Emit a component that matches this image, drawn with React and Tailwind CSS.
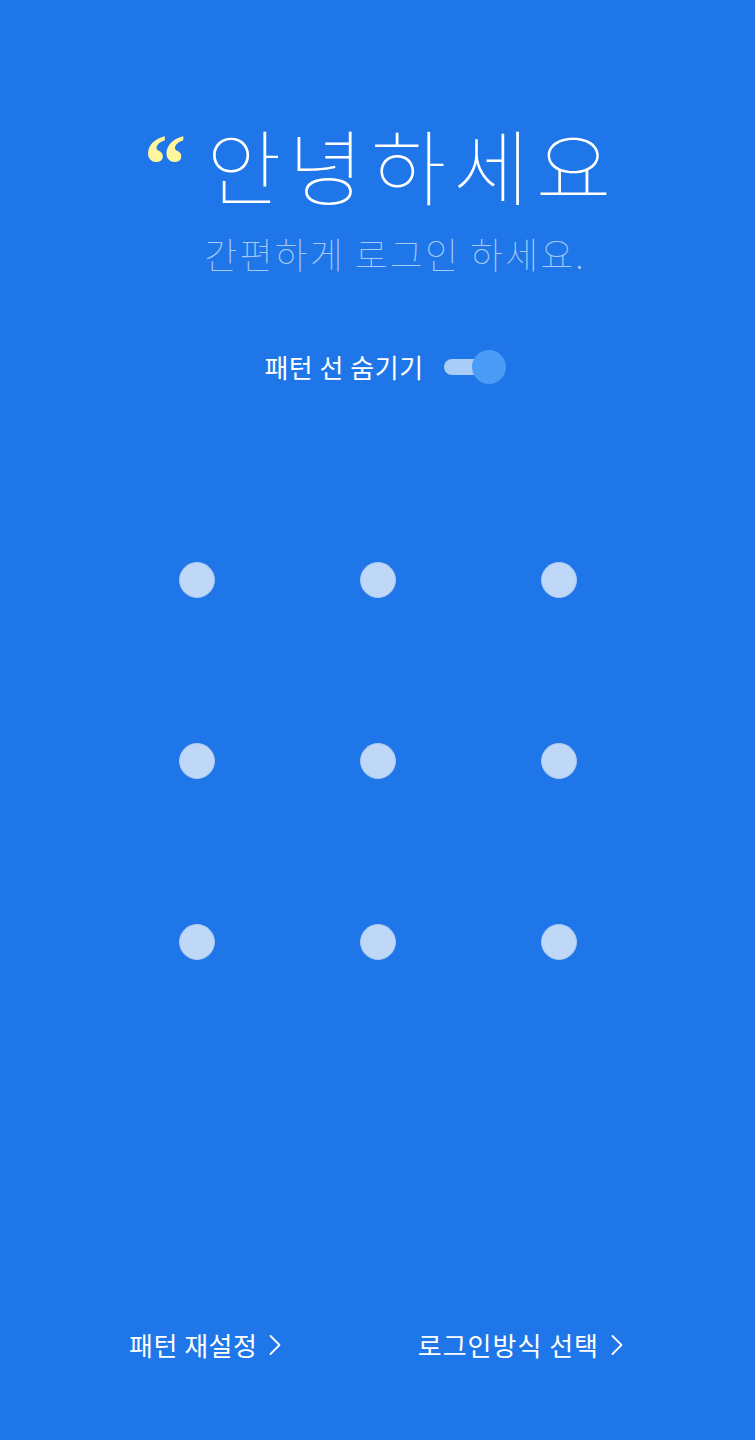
import React, { useState } from "react";

const font = { fontFamily: '"Noto Sans CJK KR", "Noto Sans", sans-serif' };

const Chevron = () => (
    <svg width="12" height="22" viewBox="0 0 12 22" fill="none" className="ml-[12px]">
        <path d="M1.5 2 L10.5 11 L1.5 20" stroke="white" strokeWidth="1.8" strokeLinecap="round" strokeLinejoin="round" />
    </svg>
);

const App = () => {
    const [hide, setHide] = useState(true);
    const dots = Array.from({ length: 9 });

    return (
        <div className="w-[755px] h-[1440px] bg-[#1e76e8] flex flex-col items-center text-white" style={font}>
            <div className="flex items-start mt-[109px]">
                <span className="text-[84px] leading-none font-bold text-[#fff59d] mt-[14px] mr-[20px] font-['Liberation_Serif',serif]">
                    “
                </span>
                <h1 className="text-[82px] leading-[110px] font-thin tracking-[7px] mr-[-7px]">안녕하세요</h1>
            </div>
            <p className="text-[36px] leading-[46px] font-thin text-[#a8cbf6] tracking-[2px] mt-[11px] ml-[35px]">
                간편하게 로그인 하세요.
            </p>

            <div className="flex items-center mt-[74px] ml-[15px]">
                <span className="text-[26px] leading-[34px] tracking-[0.5px]">패턴 선 숨기기</span>
                <button
                    type="button"
                    onClick={() => setHide(!hide)}
                    className="relative ml-[20px] w-[62px] h-[34px] flex items-center"
                >
                    <span className="w-[54px] h-[16px] rounded-full bg-[#a9cdf7]" />
                    <span className="absolute right-0 top-0 w-[34px] h-[34px] rounded-full bg-[#4b9cf6]" />
                </button>
            </div>

            <div className="grid grid-cols-3 gap-x-[145px] gap-y-[145px] mt-[178px]">
                {dots.map((_, i) => (
                    <div key={i} className="w-[36px] h-[36px] rounded-full bg-[#c0d8f8] border border-[#a9c8f0]" />
                ))}
            </div>

            <div className="mt-auto mb-[78px] w-full flex justify-between pl-[129px] pr-[132px]">
                <button type="button" className="flex items-center text-[26px] leading-[34px] tracking-[0.5px]">
                    패턴 재설정
                    <Chevron />
                </button>
                <button type="button" className="flex items-center text-[26px] leading-[34px] tracking-[1px]">
                    로그인방식 선택
                    <Chevron />
                </button>
            </div>
        </div>
    );
};

export default App;
